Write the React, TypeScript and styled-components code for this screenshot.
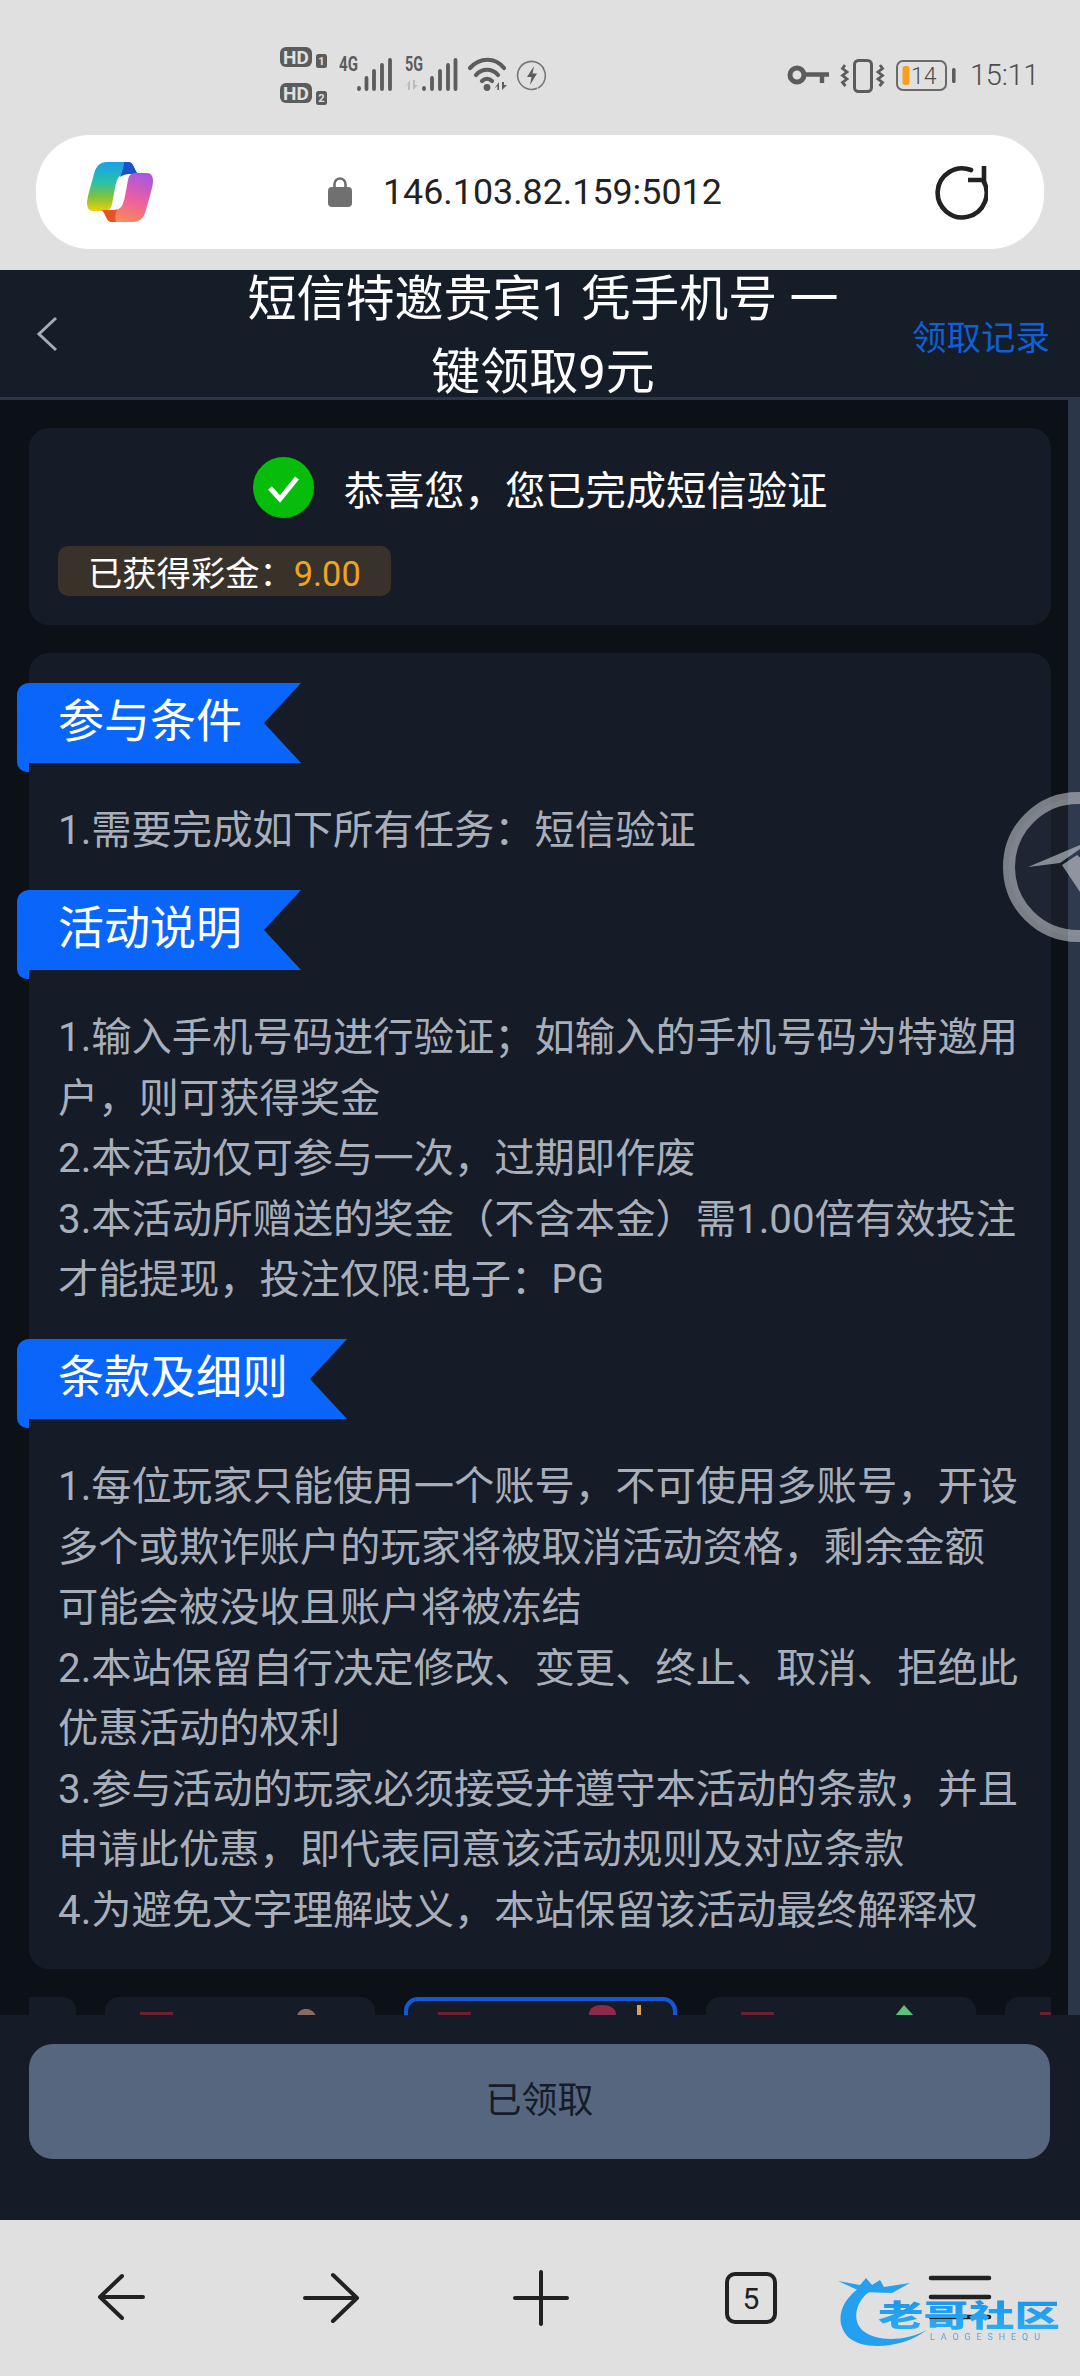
import React from "react";
import styled, { createGlobalStyle } from "styled-components";

const Global = createGlobalStyle`
  html, body { margin: 0; padding: 0; background: #e0e0e0; }
  * { box-sizing: border-box; }
  body { font-family: Roboto, "Noto Sans CJK SC", "Noto Sans", sans-serif; }
`;

const Phone = styled.div`
  position: relative;
  width: 1080px;
  height: 2376px;
  display: flex;
  flex-direction: column;
  overflow: hidden;
  background: #e0e0e0;
`;

const StatusBar = styled.div`
  height: 135px;
  padding: 30px 41px 0 260px;
  display: flex;
  align-items: flex-start;
  flex-shrink: 0;
`;

const StatusRight = styled.div`
  margin-left: auto;
  height: 70px;
  margin-top: 10px;
  display: flex;
  align-items: center;
  gap: 13px;
`;

const Clock = styled.span`
  font-size: 29px;
  font-weight: 300;
  letter-spacing: -0.3px;
  color: #4d4d4d;
`;

const UrlWrap = styled.div`
  height: 135px;
  padding: 0 36px 21px 36px;
  flex-shrink: 0;
`;

const UrlBar = styled.div`
  height: 114px;
  background: #fff;
  border-radius: 54px;
  display: flex;
  align-items: center;
  padding: 0 56px 0 51px;
`;

const Address = styled.div`
  margin-left: 175px;
  display: flex;
  align-items: center;
  gap: 31px;
  font-size: 35.8px;
  color: #222;
`;

const Reload = styled.svg`
  margin-left: auto;
`;

const Header = styled.div`
  height: 130px;
  flex-shrink: 0;
  background: #151d29;
  border-bottom: 3px solid #2b3648;
  display: grid;
  grid-template-columns: 1fr 610px 1fr;
  grid-template-rows: 127px;
  align-items: center;
  padding: 0 30px 0 36px;
`;

const Title = styled.div`
  font-size: 49px;
  line-height: 73px;
  color: #fff;
  text-align: center;
  position: relative;
  z-index: 1;
  margin-top: 4px;
`;

const HeaderLink = styled.span`
  justify-self: end;
  font-size: 34.5px;
  color: #0f5fd8;
  margin-top: 3px;
`;

const Middle = styled.div`
  position: relative;
  flex: 1;
  min-height: 0;
  display: flex;
  overflow: hidden;
  background: #0c1118;
`;

const Content = styled.div`
  flex: 1;
  min-width: 0;
  padding: 28px 17px 0 29px;
  display: flex;
  flex-direction: column;
  gap: 28px;
`;

const Track = styled.div`
  width: 12px;
  background: #2b3749;
`;

const Card = styled.div`
  background: #151c27;
  border-radius: 20px;
`;

const ResultCard = styled(Card)`
  height: 197px;
  padding: 29px;
  display: flex;
  flex-direction: column;
  gap: 28px;
`;

const ResultRow = styled.div`
  height: 61px;
  display: flex;
  justify-content: center;
  align-items: center;
  gap: 30px;
`;

const ResultText = styled.span`
  padding-top: 8px;
  font-size: 40.3px;
  line-height: 48px;
  color: #fff;
`;

const BonusChip = styled.div`
  align-self: flex-start;
  height: 50px;
  padding: 0 30px;
  border-radius: 10px;
  background: #38322b;
  font-size: 34.3px;
  line-height: 56px;
  color: #fff;
`;

const BonusValue = styled.span`
  color: #f2a31f;
`;

const RulesCard = styled(Card)`
  padding: 30px 29px 28px;
  display: flex;
  flex-direction: column;
  gap: 28.5px;
`;

const Section = styled.section`
  display: flex;
  flex-direction: column;
  gap: 38px;
`;

const Ribbon = styled.h3`
  position: relative;
  margin: 0 0 0 -41px;
  width: fit-content;
  height: 80px;
  padding: 0 59px 0 41px;
  background: #0a66fb;
  border-top-left-radius: 12px;
  font-size: 46px;
  font-weight: 400;
  line-height: 76px;
  color: #fff;
  clip-path: polygon(0 0, 100% 0, calc(100% - 37px) 50%, 100% 100%, 12px 100%, 12px calc(100% + 9px), 0 calc(100% + 9px));

  &::after {
    content: "";
    position: absolute;
    left: 0;
    top: 70px;
    width: 12px;
    height: 19px;
    background: #0a66fb;
    border-bottom-left-radius: 10px;
  }
`;

const Lines = styled.div`
  font-size: 40.3px;
  line-height: 60.5px;
  color: #a8afbb;
  white-space: nowrap;
`;

const Strip = styled.div`
  display: flex;
  gap: 29px;
  overflow: hidden;
`;

const Tile = styled.div<{ $active?: boolean }>`
  flex: 0 0 270px;
  height: 120px;
  border-radius: 14px 14px 0 0;
  background: #151c27;
  border: ${(p) => (p.$active ? "4px solid #1558d6" : "none")};
  padding-left: ${(p) => (p.$active ? "30px" : "35px")};

  &:first-child {
    margin-left: -223px;
  }
`;

const Footer = styled.div`
  height: 205px;
  flex-shrink: 0;
  background: #151c28;
  padding: 29px 30px 0 29px;
`;

const ClaimedButton = styled.button`
  display: block;
  width: 100%;
  height: 115px;
  border: 0;
  padding: 0 0 9px;
  border-radius: 24px;
  background: #56667f;
  color: #151c28;
  font-family: inherit;
  font-size: 36px;
`;

const BottomNav = styled.nav`
  height: 156px;
  flex-shrink: 0;
  display: grid;
  grid-template-columns: repeat(5, 1fr);
  padding: 0 15px 0 17px;
  align-items: center;
  justify-items: center;
`;

const FloatBall = styled.svg`
  position: absolute;
  left: 1003px;
  top: 392px;
`;

const Watermark = styled.svg`
  position: absolute;
  left: 800px;
  top: 2250px;
  filter: blur(0.6px);
`;

const StatusLeftIcons = () => {
  const bars = (xs: number[]) =>
    xs.map((x, i) => <line key={x} x1={x} x2={x} y1={[58, 48, 41, 35, 30][i]} y2={59} />);
  return (
    <svg width="300" height="90" viewBox="0 0 300 90">
      <rect x="20" y="17" width="32" height="20" rx="6" fill="#5c5c5c" />
      <text x="36" y="33.5" textAnchor="middle" fontFamily="Roboto" fontWeight="700" fontSize="19" fill="#e0e0e0">HD</text>
      <rect x="56" y="24" width="11" height="14" rx="2.5" fill="#5c5c5c" />
      <text x="61.5" y="35" textAnchor="middle" fontFamily="Roboto" fontWeight="700" fontSize="11" fill="#e0e0e0">1</text>
      <rect x="20" y="53" width="32" height="20" rx="6" fill="#5c5c5c" />
      <text x="36" y="69.5" textAnchor="middle" fontFamily="Roboto" fontWeight="700" fontSize="19" fill="#e0e0e0">HD</text>
      <rect x="56" y="61" width="11" height="14" rx="2.5" fill="#5c5c5c" />
      <text x="61.5" y="72" textAnchor="middle" fontFamily="Roboto" fontWeight="700" fontSize="11" fill="#e0e0e0">2</text>
      <text x="79" y="41" fontFamily="Roboto" fontWeight="700" fontSize="20" textLength="19" lengthAdjust="spacingAndGlyphs" fill="#5c5c5c">4G</text>
      <g stroke="#5c5c5c" strokeWidth="3.8" strokeLinecap="round">{bars([99, 106.5, 114, 122, 130])}</g>
      <text x="145" y="41" fontFamily="Roboto" fontWeight="700" fontSize="20" textLength="18" lengthAdjust="spacingAndGlyphs" fill="#5c5c5c">5G</text>
      <path d="M150 50 v10 h-2 v-6 l-3 3z M153 50 v10 l5-5 h-3 v-5z" fill="#bbb" />
      <g stroke="#5c5c5c" strokeWidth="3.8" strokeLinecap="round">{bars([164, 172, 180, 188, 195.5])}</g>
      <g fill="none" stroke="#5c5c5c" strokeWidth="4.2" strokeLinecap="round">
        <path d="M210 38 C220 27 235 27 244 38" />
        <path d="M216 45 C222 38 232 38 238 45" />
        <path d="M222 51 C225 48 229 48 232 51" />
      </g>
      <circle cx="227" cy="57.5" r="3.4" fill="#5c5c5c" />
      <path d="M239 52 v8 h-1.6 v-4 l-3 2.4z M242 52 l0 8 l5-5 h-3 v-3z" fill="#5c5c5c" />
      <path d="M281 35 A14 14 0 1 0 281 56" transform="rotate(18 272 45)" fill="none" stroke="#777" strokeWidth="1.6" />
      <path d="M283 38 A14 14 0 0 1 278 58" fill="none" stroke="#777" strokeWidth="1.6" />
      <path d="M274 36 L267 47 H271.5 L270 55 L277 43.5 H272.5 Z" fill="#5c5c5c" />
    </svg>
  );
};

const StatusRightIcons = () => (
  <svg width="188" height="70" viewBox="0 0 188 70">
    <circle cx="28" cy="35" r="7" fill="none" stroke="#5c5c5c" strokeWidth="5" />
    <path d="M36 34.5 H60 M53 35 v8" fill="none" stroke="#5c5c5c" strokeWidth="4.4" />
    <rect x="85.5" y="20.5" width="17" height="31" rx="4" fill="none" stroke="#5c5c5c" strokeWidth="3" />
    <path d="M76 25 l-2.5 3.5 l4.5 3.5 l-4.5 3.5 l4.5 3.5 l-4.5 3.5 l3 3.5" fill="none" stroke="#5c5c5c" strokeWidth="2.8" />
    <path d="M111 25 l2.5 3.5 l-4.5 3.5 l4.5 3.5 l-4.5 3.5 l4.5 3.5 l-3 3.5" fill="none" stroke="#5c5c5c" strokeWidth="2.8" />
    <rect x="128" y="21" width="49" height="29" rx="6" fill="none" stroke="#6a6a6a" strokeWidth="2" />
    <rect x="133.5" y="26" width="7" height="19" rx="2.5" fill="#f7a01d" />
    <text x="142" y="44" fontFamily="Roboto" fontWeight="300" fontSize="23" fill="#4d4d4d">14</text>
    <rect x="183" y="28" width="3.6" height="15" rx="1.6" fill="#5c5c5c" />
  </svg>
);

const CopilotLogo = () => (
  <svg width="66" height="60" viewBox="0 0 66 60">
    <defs>
      <linearGradient id="copLeft" x1="0" y1="0" x2="0" y2="1">
        <stop offset="0" stopColor="#1a9fe8" />
        <stop offset="0.4" stopColor="#27c0ae" />
        <stop offset="0.7" stopColor="#7cc23f" />
        <stop offset="1" stopColor="#f0cf0a" />
      </linearGradient>
      <linearGradient id="copRight" x1="0.6" y1="0" x2="0.3" y2="1">
        <stop offset="0" stopColor="#ab58dd" />
        <stop offset="0.5" stopColor="#ee5f9f" />
        <stop offset="1" stopColor="#f98d55" />
      </linearGradient>
    </defs>
    <path d="M20 0 H41 C47 0 47 8 51 12 H40 C32 12 30 16 28 26 L25 42 C24 47 22 49 17 49 H6 C2 49 0 46 0 41 C0 38 1 34 2 30 L7 12 C9 4 13 0 20 0Z" fill="url(#copLeft)" />
    <path d="M37 0 H41 C47 0 47 8 51 12 H42 C39 12 36 13 33 15 C36 8 37 4 37 0Z" fill="#1c51c7" />
    <path d="M49 11 H60 C64 11 66 14 66 19 C66 22 65 26 64 30 L59 48 C57 56 53 60 46 60 H25 C19 60 19 52 15 48 H26 C34 48 36 44 38 34 L41 18 C42 13 44 11 49 11Z" fill="url(#copRight)" />
    <path d="M15 48 H26 C28 48 29 48 30 47 C28 52 28 57 29 60 H25 C19 60 19 52 15 48Z" fill="#e65428" />
  </svg>
);

const LockIcon = () => (
  <svg width="24" height="30" viewBox="0 0 24 30">
    <path d="M6.5 11 V7 a5.5 5.5 0 0 1 11 0 V11" fill="none" stroke="#707070" strokeWidth="2.6" />
    <rect x="0" y="10" width="24" height="20" rx="4" fill="#707070" />
  </svg>
);

const CheckBadge = () => (
  <svg width="61" height="61" viewBox="0 0 61 61">
    <circle cx="30.5" cy="30.5" r="30.5" fill="#05bd0a" />
    <path d="M17 31 L27 42 L44 21" fill="none" stroke="#fff" strokeWidth="5" />
  </svg>
);

// 底部导航图标
const NavIcon = ({ children }: { children: React.ReactNode }) => (
  <svg width="64" height="64" viewBox="0 0 64 64" fill="none" stroke="#222" strokeWidth="4" strokeLinecap="round" strokeLinejoin="round">
    {children}
  </svg>
);

const WatermarkLogo = () => (
  <Watermark width="280" height="110" viewBox="0 0 280 110">
    <defs>
      <linearGradient id="wmText" x1="0" y1="0" x2="0" y2="1">
        <stop offset="0" stopColor="#1a8fe8" />
        <stop offset="1" stopColor="#2cb0f7" />
      </linearGradient>
    </defs>
    <path d="M62 36 C40 50 34 72 48 87 C62 100 100 100 127 80 C104 92 76 92 62 80 C50 68 58 48 72 40 Z" fill="#259ff0" />
    <path d="M38 31 L60 35 L66 28 L72 35 L80 30 L84 37 L110 33 L92 43 L62 42 Z" fill="#259ff0" />
    <text x="78" y="76" fontFamily="Noto Sans CJK SC" fontWeight="900" fontSize="30" textLength="182" lengthAdjust="spacingAndGlyphs" fill="url(#wmText)">老哥社区</text>
    <text x="130" y="90" fontFamily="Roboto" fontSize="9" textLength="110" fill="#58a6dc">LAOGESHEQU</text>
  </Watermark>
);

const conditionLines = ["1.需要完成如下所有任务：短信验证"];
const activityLines = [
  "1.输入手机号码进行验证；如输入的手机号码为特邀用",
  "户，则可获得奖金",
  "2.本活动仅可参与一次，过期即作废",
  "3.本活动所赠送的奖金（不含本金）需1.00倍有效投注",
  "才能提现，投注仅限:电子：PG",
];
const termLines = [
  "1.每位玩家只能使用一个账号，不可使用多账号，开设",
  "多个或欺诈账户的玩家将被取消活动资格，剩余金额",
  "可能会被没收且账户将被冻结",
  "2.本站保留自行决定修改、变更、终止、取消、拒绝此",
  "优惠活动的权利",
  "3.参与活动的玩家必须接受并遵守本活动的条款，并且",
  "申请此优惠，即代表同意该活动规则及对应条款",
  "4.为避免文字理解歧义，本站保留该活动最终解释权",
];

const sections = [
  { title: "参与条件", lines: conditionLines },
  { title: "活动说明", lines: activityLines },
  { title: "条款及细则", lines: termLines },
];

// 被底栏遮住的游戏卡片，只露出顶部一点
const TileArt = ({ kind }: { kind: "none" | "brown" | "maroon" | "green" }) => (
  <svg width="235" height="30" viewBox="0 0 235 30">
    {kind === "maroon" ? (
      <g>
        <rect x="0" y="11" width="33" height="4" fill="#6e1f2d" />
        <path d="M151 13 C151 7 157 4 164 4 C171 4 178 7 178 13 V14 H151 Z" fill="#8b2a4a" />
        <rect x="199" y="4" width="4" height="10" fill="#d9a257" />
      </g>
    ) : (
      <rect x="0" y="15" width="33" height="4" fill="#6e1f2d" />
    )}
    {kind === "brown" && <path d="M157 19 C158 14 162 12 166 12 C170 12 174 14 176 19 Z" fill="#8c6a5e" />}
    {kind === "green" && <path d="M154 19 L163 8 L173 19 Z" fill="#5cc27a" />}
  </svg>
);

export default function App() {
  return (
    <Phone>
      <Global />
      <StatusBar>
        <StatusLeftIcons />
        <StatusRight>
          <StatusRightIcons />
          <Clock>15:11</Clock>
        </StatusRight>
      </StatusBar>

      <UrlWrap>
        <UrlBar>
          <CopilotLogo />
          <Address>
            <LockIcon />
            <span>146.103.82.159:5012</span>
          </Address>
          <Reload width="54" height="56" viewBox="0 0 54 56" fill="none" stroke="#222" strokeWidth="4.6">
            <path d="M49 16 A24.5 24.5 0 1 1 37 6" strokeLinecap="round" />
            <path d="M50 2 V16 H34" />
          </Reload>
        </UrlBar>
      </UrlWrap>

      <Header>
        <svg width="22" height="36" viewBox="0 0 22 36" fill="none" stroke="#a3acb9" strokeWidth="3">
          <path d="M20 2 L3 18 L20 34" />
        </svg>
        <Title>短信特邀贵宾1 凭手机号 一键领取9元</Title>
        <HeaderLink>领取记录</HeaderLink>
      </Header>

      <Middle>
        <Content>
          <ResultCard>
            <ResultRow>
              <CheckBadge />
              <ResultText>恭喜您，您已完成短信验证</ResultText>
            </ResultRow>
            <BonusChip>
              已获得彩金：<BonusValue>9.00</BonusValue>
            </BonusChip>
          </ResultCard>

          <RulesCard>
            {sections.map((s) => (
              <Section key={s.title}>
                <Ribbon>{s.title}</Ribbon>
                <Lines>
                  {s.lines.map((l) => (
                    <div key={l}>{l}</div>
                  ))}
                </Lines>
              </Section>
            ))}
          </RulesCard>

          <Strip>
            <Tile />
            <Tile>
              <TileArt kind="brown" />
            </Tile>
            <Tile $active>
              <TileArt kind="maroon" />
            </Tile>
            <Tile>
              <TileArt kind="green" />
            </Tile>
            <Tile>
              <TileArt kind="none" />
            </Tile>
          </Strip>
        </Content>
        <Track />
        <FloatBall width="150" height="150" viewBox="0 0 150 150">
          <circle cx="75" cy="75" r="69" fill="rgba(70,72,95,0.22)" stroke="rgba(205,210,215,0.55)" strokeWidth="12" />
          <path d="M25 75 L77 53 L80 55 L57 71 Z" fill="rgba(205,210,215,0.6)" />
          <path d="M59 73 L74 63 L100 85 L77 100 Z" fill="rgba(205,210,215,0.6)" />
        </FloatBall>
      </Middle>

      <Footer>
        <ClaimedButton>已领取</ClaimedButton>
      </Footer>

      <BottomNav>
        <NavIcon>
          <path d="M53 31 H10 M32 10 L10 31 L32 52" />
        </NavIcon>
        <NavIcon>
          <path d="M6 32 H58 M34 9 L58 32 L34 55" />
        </NavIcon>
        <NavIcon>
          <path d="M6 32 H58 M32 6 V58" />
        </NavIcon>
        <svg width="64" height="64" viewBox="0 0 64 64">
          <rect x="8" y="8" width="48" height="48" rx="8" fill="none" stroke="#222" strokeWidth="4" />
          <text x="32" y="43" textAnchor="middle" fontFamily="Roboto" fontSize="30" fill="#222">5</text>
        </svg>
        <NavIcon>
          <path d="M3 12 H61 M3 31 H61 M3 51 H61" strokeWidth="4.6" />
        </NavIcon>
      </BottomNav>

      <WatermarkLogo />
    </Phone>
  );
}
